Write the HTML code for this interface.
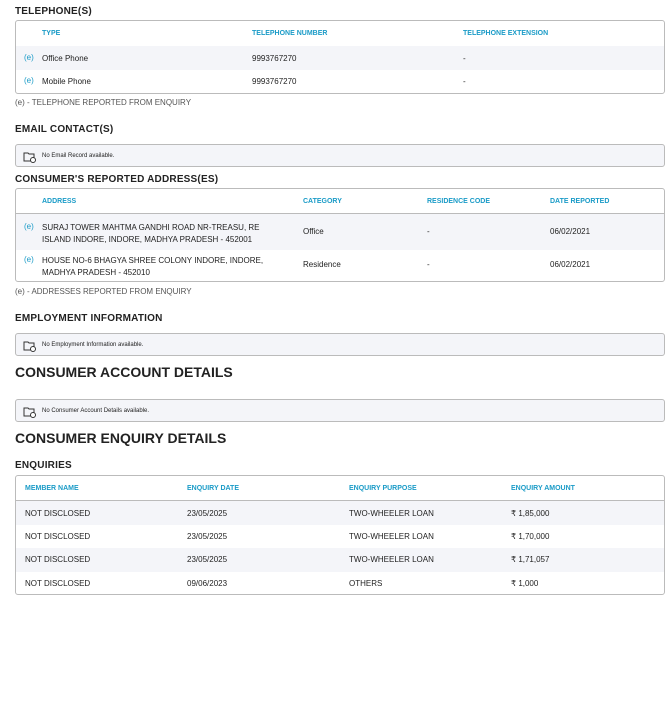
<!DOCTYPE html>
<html><head><style>
*{margin:0;padding:0;box-sizing:border-box}
body{width:672px;height:717px;background:#fff;font-family:"Liberation Sans",sans-serif;color:#222;position:relative;overflow:hidden}
.a{position:absolute;white-space:nowrap}
.t{font-size:10px;font-weight:bold;letter-spacing:.2px;color:#222}
.h{font-size:14px;font-weight:bold;color:#222}
.box{position:absolute;left:15px;width:650px;border:1px solid #bbb;border-radius:3px;overflow:hidden}
.row{position:absolute;left:0;right:0}
.g{background:#f4f5f9}
.th{font-size:7px;font-weight:bold;color:#1a9bc7}
.td{font-size:8px;color:#222}
.e{font-size:8px;color:#1a9bc7;line-height:12px}
.note{font-size:8px;color:#555}
.nb{position:absolute;left:15px;width:650px;height:23px;border:1px solid #bbb;border-radius:3px;background:#f4f5f9;font-size:6px;color:#222}
.nb svg{position:absolute;left:7px;top:6px}
.nb span{position:absolute;left:26px;top:8px}
</style></head><body>
<div class="a t" style="left:15px;top:6px">TELEPHONE(S)</div>
<div class="box" style="top:20px;height:74px">
 <div class="row" style="top:0;height:25px"><span class="a th" style="left:26px;top:9px">TYPE</span><span class="a th" style="left:236px;top:9px">TELEPHONE NUMBER</span><span class="a th" style="left:447px;top:9px">TELEPHONE EXTENSION</span></div>
 <div class="row g" style="top:25px;height:24px"><span class="a e" style="left:8px;top:6px">(e)</span><span class="a td" style="left:26px;top:8px">Office Phone</span><span class="a td" style="left:236px;top:8px">9993767270</span><span class="a td" style="left:447px;top:8px">-</span></div>
 <div class="row" style="top:49px;height:24px"><span class="a e" style="left:8px;top:5px">(e)</span><span class="a td" style="left:26px;top:7px">Mobile Phone</span><span class="a td" style="left:236px;top:7px">9993767270</span><span class="a td" style="left:447px;top:7px">-</span></div>
</div>
<div class="a note" style="left:15px;top:98px">(e) - TELEPHONE REPORTED FROM ENQUIRY</div>
<div class="a t" style="left:15px;top:124px">EMAIL CONTACT(S)</div>
<div class="nb" style="top:144px"><svg width="14" height="12" viewBox="0 0 14 12"><path d="M1 2h4l1 1h5v7H1z" fill="none" stroke="#333"/><circle cx="10" cy="9" r="2.5" fill="#fff" stroke="#333"/></svg><span>No Email Record available.</span></div>
<div class="a t" style="left:15px;top:174px">CONSUMER'S REPORTED ADDRESS(ES)</div>
<div class="box" style="top:188px;height:94px">
 <div class="row" style="top:0;height:25px;border-bottom:1px solid #bbb"><span class="a th" style="left:26px;top:9px">ADDRESS</span><span class="a th" style="left:287px;top:9px">CATEGORY</span><span class="a th" style="left:411px;top:9px">RESIDENCE CODE</span><span class="a th" style="left:534px;top:9px">DATE REPORTED</span></div>
 <div class="row g" style="top:25px;height:36px"><span class="a e" style="left:8px;top:7px">(e)</span><span class="a td" style="left:26px;top:8px;line-height:12px">SURAJ TOWER MAHTMA GANDHI ROAD NR-TREASU, RE<br>ISLAND INDORE, INDORE, MADHYA PRADESH - 452001</span><span class="a td" style="left:287px;top:13px">Office</span><span class="a td" style="left:411px;top:13px">-</span><span class="a td" style="left:534px;top:13px">06/02/2021</span></div>
 <div class="row" style="top:61px;height:33px"><span class="a e" style="left:8px;top:4px">(e)</span><span class="a td" style="left:26px;top:5px;line-height:12px">HOUSE NO-6 BHAGYA SHREE COLONY INDORE, INDORE,<br>MADHYA PRADESH - 452010</span><span class="a td" style="left:287px;top:10px">Residence</span><span class="a td" style="left:411px;top:10px">-</span><span class="a td" style="left:534px;top:10px">06/02/2021</span></div>
</div>
<div class="a note" style="left:15px;top:287px">(e) - ADDRESSES REPORTED FROM ENQUIRY</div>
<div class="a t" style="left:15px;top:313px">EMPLOYMENT INFORMATION</div>
<div class="nb" style="top:333px"><svg width="14" height="12" viewBox="0 0 14 12"><path d="M1 2h4l1 1h5v7H1z" fill="none" stroke="#333"/><circle cx="10" cy="9" r="2.5" fill="#fff" stroke="#333"/></svg><span>No Employment Information available.</span></div>
<div class="a h" style="left:15px;top:364px">CONSUMER ACCOUNT DETAILS</div>
<div class="nb" style="top:399px"><svg width="14" height="12" viewBox="0 0 14 12"><path d="M1 2h4l1 1h5v7H1z" fill="none" stroke="#333"/><circle cx="10" cy="9" r="2.5" fill="#fff" stroke="#333"/></svg><span>No Consumer Account Details available.</span></div>
<div class="a h" style="left:15px;top:430px">CONSUMER ENQUIRY DETAILS</div>
<div class="a t" style="left:15px;top:460px">ENQUIRIES</div>
<div class="box" style="top:475px;height:120px">
 <div class="row" style="top:0;height:25px;border-bottom:1px solid #bbb"><span class="a th" style="left:9px;top:9px">MEMBER NAME</span><span class="a th" style="left:171px;top:9px">ENQUIRY DATE</span><span class="a th" style="left:333px;top:9px">ENQUIRY PURPOSE</span><span class="a th" style="left:495px;top:9px">ENQUIRY AMOUNT</span></div>
 <div class="row g" style="top:25px;height:24px"><span class="a td" style="left:9px;top:8px">NOT DISCLOSED</span><span class="a td" style="left:171px;top:8px">23/05/2025</span><span class="a td" style="left:333px;top:8px">TWO-WHEELER LOAN</span><span class="a td" style="left:495px;top:8px">₹ 1,85,000</span></div>
 <div class="row" style="top:49px;height:23px"><span class="a td" style="left:9px;top:7px">NOT DISCLOSED</span><span class="a td" style="left:171px;top:7px">23/05/2025</span><span class="a td" style="left:333px;top:7px">TWO-WHEELER LOAN</span><span class="a td" style="left:495px;top:7px">₹ 1,70,000</span></div>
 <div class="row g" style="top:72px;height:24px"><span class="a td" style="left:9px;top:7px">NOT DISCLOSED</span><span class="a td" style="left:171px;top:7px">23/05/2025</span><span class="a td" style="left:333px;top:7px">TWO-WHEELER LOAN</span><span class="a td" style="left:495px;top:7px">₹ 1,71,057</span></div>
 <div class="row" style="top:96px;height:23px"><span class="a td" style="left:9px;top:7px">NOT DISCLOSED</span><span class="a td" style="left:171px;top:7px">09/06/2023</span><span class="a td" style="left:333px;top:7px">OTHERS</span><span class="a td" style="left:495px;top:7px">₹ 1,000</span></div>
</div>
</body></html>
